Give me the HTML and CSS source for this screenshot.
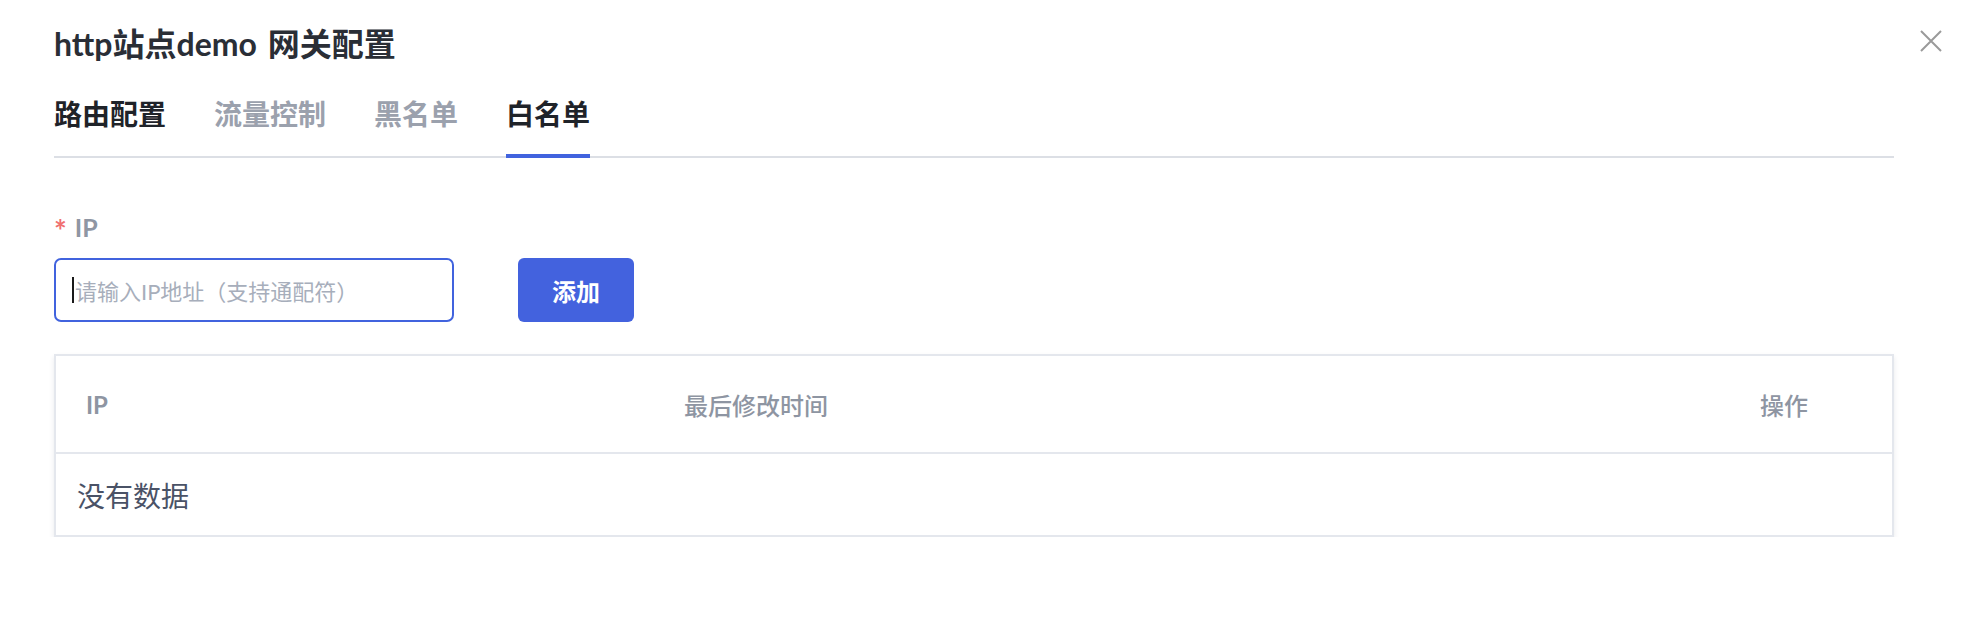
FILE: index.html
```html
<!DOCTYPE html>
<html lang="zh-CN">
<head>
<meta charset="utf-8">
<title>http站点demo 网关配置</title>
<link rel="stylesheet" href="styles.css">
</head>
<body>
<div class="dialog">
  <button class="close" aria-label="关闭">
    <svg width="22" height="22" viewBox="0 0 22 22"><path d="M1 1 L21 21 M21 1 L1 21" stroke="#9a9a9a" stroke-width="2" fill="none"/></svg>
  </button>
  <h1 class="title">http站点demo 网关配置</h1>
  <nav class="tabs">
    <span class="tab">路由配置</span>
    <span class="tab muted">流量控制</span>
    <span class="tab muted">黑名单</span>
    <span class="tab active">白名单</span>
  </nav>
  <div class="form">
    <div class="label"><span class="req">*</span><span>IP</span></div>
    <div class="row">
      <div class="input"><span class="caret"></span><span class="ph">请输入IP地址（支持通配符）</span></div>
      <button class="btn">添加</button>
    </div>
  </div>
  <div class="table">
    <div class="thead">
      <div class="th">IP</div>
      <div class="th">最后修改时间</div>
      <div class="th">操作</div>
    </div>
    <div class="empty">没有数据</div>
  </div>
</div>
</body>
</html>
```
FILE: styles.css
```css
* { box-sizing: border-box; }
html, body { margin: 0; padding: 0; background: #fff; }
body { font-family: Lato, "Noto Sans CJK SC", sans-serif; }

.dialog {
  position: relative;
  padding: 24px 78px 0 54px;
}

.close {
  position: absolute;
  top: 30px;
  right: 30px;
  width: 22px;
  height: 22px;
  padding: 0;
  border: 0;
  background: none;
  display: block;
}
.close svg { display: block; }

.title {
  margin: 0;
  font-size: 32px;
  line-height: 40px;
  font-weight: 700;
  color: #2a2e36;
  word-spacing: 3px;
}

.tabs {
  display: flex;
  gap: 48px;
  margin-top: 30px;
  border-bottom: 2px solid #dcdfe5;
}
.tab {
  font-size: 28px;
  line-height: 40px;
  font-weight: 700;
  color: #1f2329;
  padding-bottom: 20px;
  border-bottom: 4px solid transparent;
  margin-bottom: -2px;
}
.tab.muted { color: #9ba1ad; }
.tab.active { border-bottom-color: #4163de; }

.form { margin-top: 50px; }
.label {
  display: flex;
  align-items: center;
  gap: 8px;
  font-size: 25px;
  line-height: 32px;
  font-weight: 700;
  color: #8f96a3;
}
.req { color: #f07070; font-size: 30px; line-height: 32px; padding-top: 6px; }

.row {
  display: flex;
  gap: 64px;
  margin-top: 12px;
}
.input {
  width: 400px;
  height: 64px;
  border: 2px solid #4163de;
  border-radius: 7px;
  display: flex;
  align-items: center;
  padding-left: 16px;
}
.caret {
  width: 2px;
  height: 26px;
  background: #1a1a1a;
  margin-right: 1px;
}
.ph {
  font-size: 22px;
  color: #a7aebb;
  font-weight: 400;
}
.btn {
  width: 116px;
  height: 64px;
  border: 0;
  border-radius: 6px;
  background: #4362de;
  color: #fff;
  font-family: inherit;
  font-size: 24px;
  font-weight: 700;
}

.table {
  margin-top: 32px;
  border: 2px solid #e4e7ed;
  box-shadow: 0 3px 5px rgba(40, 50, 80, 0.1);
}
.thead {
  display: grid;
  grid-template-columns: 598px 1fr 162px;
  height: 98px;
  align-items: center;
  border-bottom: 2px solid #e4e7ed;
}
.th {
  padding-left: 30px;
  font-size: 24px;
  font-weight: 500;
  color: #8e95a2;
}
.th:first-child { font-weight: 700; }
.empty {
  height: 81px;
  display: flex;
  align-items: center;
  padding-left: 21px;
  font-size: 28px;
  color: #4a5266;
}
```
